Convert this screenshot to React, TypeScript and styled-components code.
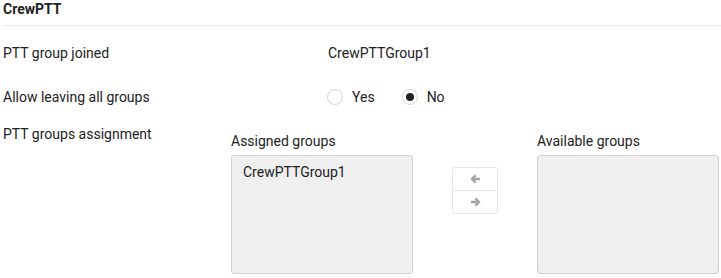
import React from "react";
import styled, { createGlobalStyle } from "styled-components";

const Global = createGlobalStyle`
  html, body { margin: 0; padding: 0; background: #fff; }
  body { font-family: Roboto, "Noto Sans", sans-serif; font-size: 14px; color: #222; }
`;

const Panel = styled.div`
  width: 721px;
  height: 278px;
  overflow: hidden;
`;

const Header = styled.div`
  height: 25px;
  line-height: 19px;
  margin-left: 3px;
  font-weight: 700;
  border-bottom: 1px solid #ebebeb;
`;

const Row = styled.div<{ $top?: number }>`
  display: flex;
  align-items: center;
  height: 44px;
  margin-top: ${(p) => p.$top ?? 0}px;
  padding-left: 3px;
  line-height: 20px;
`;

const Label = styled.div`
  width: 325px;
  flex: none;
`;

const RadioGroup = styled.div`
  display: flex;
  align-items: center;
`;

const RadioOption = styled.label`
  display: flex;
  align-items: center;
  margin-left: -1px;
  margin-right: 28px;
`;

const RadioCircle = styled.span<{ $checked?: boolean }>`
  box-sizing: border-box;
  width: 16px;
  height: 16px;
  border-radius: 50%;
  border: 1px solid #d6d6d6;
  background: #fff;
  display: inline-flex;
  align-items: center;
  justify-content: center;
  margin-right: 9px;
  &::after {
    content: "";
    width: 8px;
    height: 8px;
    border-radius: 50%;
    background: ${(p) => (p.$checked ? "#222" : "transparent")};
  }
`;

const AssignRow = styled.div`
  display: flex;
  align-items: flex-start;
  padding-left: 3px;
  padding-top: 5px;
  line-height: 20px;
`;

const AssignLabel = styled.div`
  width: 228px;
  flex: none;
`;

const DualList = styled.div`
  display: grid;
  grid-template-columns: 182px 46px 182px;
  column-gap: 39px;
  align-items: start;
`;

const ListColumn = styled.div`
  display: flex;
  flex-direction: column;
  padding-top: 7px;
`;

const ListTitle = styled.div`
  height: 20px;
  margin-bottom: 4px;
`;

const ListBox = styled.div`
  box-sizing: border-box;
  height: 119px;
  background: #efefef;
  border: 1px solid #d2d2d2;
  border-radius: 3px;
  padding: 6px 11px;
  line-height: 20px;
`;

const Buttons = styled.div`
  margin-top: 43px;
  box-sizing: border-box;
  width: 46px;
  border: 1px solid #e6e6e6;
  border-radius: 3px;
  display: flex;
  flex-direction: column;
`;

const MoveButton = styled.button<{ $top?: boolean }>`
  all: unset;
  height: 22px;
  display: flex;
  align-items: center;
  justify-content: center;
  border-top: ${(p) => (p.$top ? "none" : "1px solid #e6e6e6")};
  color: #a4a4a4;
`;

const Arrow = ({ dir }: { dir: "left" | "right" }) => (
  <svg width="11" height="10" viewBox="0 0 11 10" style={{ transform: dir === "right" ? "scaleX(-1)" : undefined }}>
    <path d="M10 5H2.5M5.6 1.4L2 5l3.6 3.6" stroke="currentColor" strokeWidth="2.3" fill="none" />
  </svg>
);

export default function App() {
  return (
    <Panel>
      <Global />
      <Header>CrewPTT</Header>
      <Row $top={5}>
        <Label>PTT group joined</Label>
        <div>CrewPTTGroup1</div>
      </Row>
      <Row>
        <Label>Allow leaving all groups</Label>
        <RadioGroup>
          <RadioOption>
            <RadioCircle />
            Yes
          </RadioOption>
          <RadioOption>
            <RadioCircle $checked />
            No
          </RadioOption>
        </RadioGroup>
      </Row>
      <AssignRow>
        <AssignLabel>PTT groups assignment</AssignLabel>
        <DualList>
          <ListColumn>
            <ListTitle>Assigned groups</ListTitle>
            <ListBox>CrewPTTGroup1</ListBox>
          </ListColumn>
          <Buttons>
            <MoveButton $top aria-label="Move left"><Arrow dir="left" /></MoveButton>
            <MoveButton aria-label="Move right"><Arrow dir="right" /></MoveButton>
          </Buttons>
          <ListColumn>
            <ListTitle>Available groups</ListTitle>
            <ListBox />
          </ListColumn>
        </DualList>
      </AssignRow>
    </Panel>
  );
}
